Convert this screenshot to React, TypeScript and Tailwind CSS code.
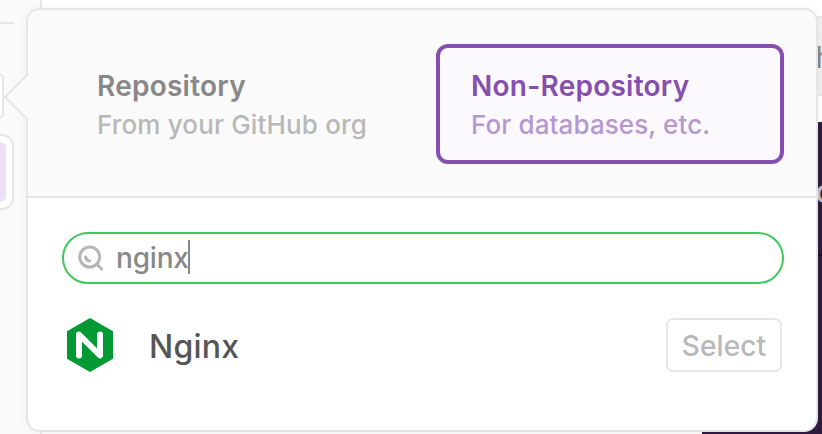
function Backdrop() {
  return (
    <div className="flex h-full w-full">
      <div className="h-full w-[42px] shrink-0 border-r-2 border-[#e6e6e6] bg-[#fafafa]">
        <div className="h-6 w-3.5 border-b-2 border-[#e6e6e6]" />
        <div className="mt-[50px] h-[44px] w-1 rounded-r-[5px] border-2 border-l-0 border-[#e6e6e6] bg-white" />
        <div className="mt-4 h-[76px] w-3.5 rounded-r-[12px] border-2 border-l-0 border-[#e6e6e6] bg-white py-[6px]">
          <div className="h-[60px] w-1.5 rounded-r-[6px] bg-[#ecdff6]" />
        </div>
      </div>
      <div className="flex min-w-0 flex-1 flex-col">
        <div className="h-4 bg-white" />
        <div className="flex h-20 items-center justify-end overflow-hidden border-y-2 border-[#e6e6e6] bg-[#f0f0f0] pt-0.5">
          <span className="-mr-[11px] text-[30px] leading-none font-medium text-[#888]">h</span>
        </div>
        <div className="h-[26px] bg-white" />
        <div className="flex flex-1">
          <div className="flex-1 bg-[#fafafa]" />
          <div className="w-[120px] overflow-hidden bg-[#301b40]">
            <div className="flex h-[134px] items-center justify-end border-b-2 border-[#1d1028] pt-1.5">
              <span className="-mr-[13px] text-[33px] leading-none font-medium text-[#c5bfca]">o</span>
            </div>
          </div>
        </div>
      </div>
    </div>
  );
}

function NginxLogo() {
  return (
    <svg className="h-[54px] w-[46px]" viewBox="0 0 46 54" fill="none">
      <path d="M23 0 46 13.3V40.7L23 54 0 40.7V13.3Z" fill="#009933" />
      <path d="M12 37.5V16.5L33 37.5V16.5" stroke="#fff" strokeWidth="6" strokeLinecap="round" strokeLinejoin="round" />
    </svg>
  );
}

function SearchIcon() {
  return (
    <svg className="h-[28px] w-[28px]" viewBox="0 0 28 28" fill="none" stroke="#b5b5b5" strokeWidth="3" strokeLinecap="round">
      <circle cx="12.7" cy="13" r="10" />
      <path d="M8.6 13c.3 2.3 1.7 3.7 4.1 3.9M20.2 20.5l4.5 4.5" />
    </svg>
  );
}

export default function App() {
  return (
    <div className="relative h-[434px] w-[822px] overflow-hidden bg-white font-['Inter',sans-serif]">
      <Backdrop />
      <div className="absolute top-2 left-[26px] flex h-[424px] w-[792px] flex-col rounded-[14px] border-2 border-[#e6e6e6] bg-white shadow-[0_0_12px_rgba(0,0,0,0.04)]">
        <div className="flex h-[188px] shrink-0 justify-between rounded-t-[12px] border-b-2 border-[#e6e6e6] bg-[#fafafa] pt-[34px] pr-8 pl-[34px]">
          <div className="flex h-[120px] w-[348px] flex-col pt-[23px] pl-[35px] whitespace-nowrap">
            <span className="text-[28px] leading-[38px] font-semibold tracking-[0.25px] text-[#888]">Repository</span>
            <span className="text-[26px] leading-[40px] font-[450] tracking-[0.15px] text-[#b8b8b8]">From your GitHub org</span>
          </div>
          <div className="flex h-[120px] w-[348px] flex-col rounded-[12px] border-4 border-[#864fae] bg-[#fbf9fd] pt-[19px] pl-[31px] whitespace-nowrap">
            <span className="text-[28px] leading-[38px] font-semibold tracking-[0.25px] text-[#864fae]">Non-Repository</span>
            <span className="text-[26px] leading-[40px] font-[450] tracking-[0.1px] text-[#b797d0]">For databases, etc.</span>
          </div>
        </div>
        <div className="flex flex-col pt-[34px] pr-8 pl-[34px]">
          <div className="flex h-[52px] items-center rounded-full border-2 border-[#3fc75d] pl-[13px]">
            <SearchIcon />
            <span className="ml-[11px] text-[28px] leading-[34px] font-[450] tracking-[-0.2px] text-[#888]">nginx</span>
            <span className="-mt-0.5 -ml-px h-[34px] w-0.5 bg-[#888]" />
          </div>
          <div className="mt-[34px] flex h-[54px] items-center pr-0.5 pl-[5px]">
            <NginxLogo />
            <span className="ml-9 pt-[3px] text-[32px] leading-[54px] font-[450] tracking-[0.2px] text-[#555]">Nginx</span>
            <div className="ml-auto flex h-[54px] w-[116px] items-center justify-center rounded-[7px] border-2 border-[#e6e6e6] pt-0.5 text-[28px] font-[450] tracking-[0.1px] text-[#b8b8b8]">
              Select
            </div>
          </div>
        </div>
        <svg className="absolute top-[62px] -left-[25px] h-[50px] w-[26px]" viewBox="0 0 26 50" fill="none">
          <path d="M26 2 3 25 26 48Z" fill="#fafafa" />
          <path d="M25 2 2 25 25 48" stroke="#e6e6e6" strokeWidth="2" />
        </svg>
      </div>
    </div>
  );
}
